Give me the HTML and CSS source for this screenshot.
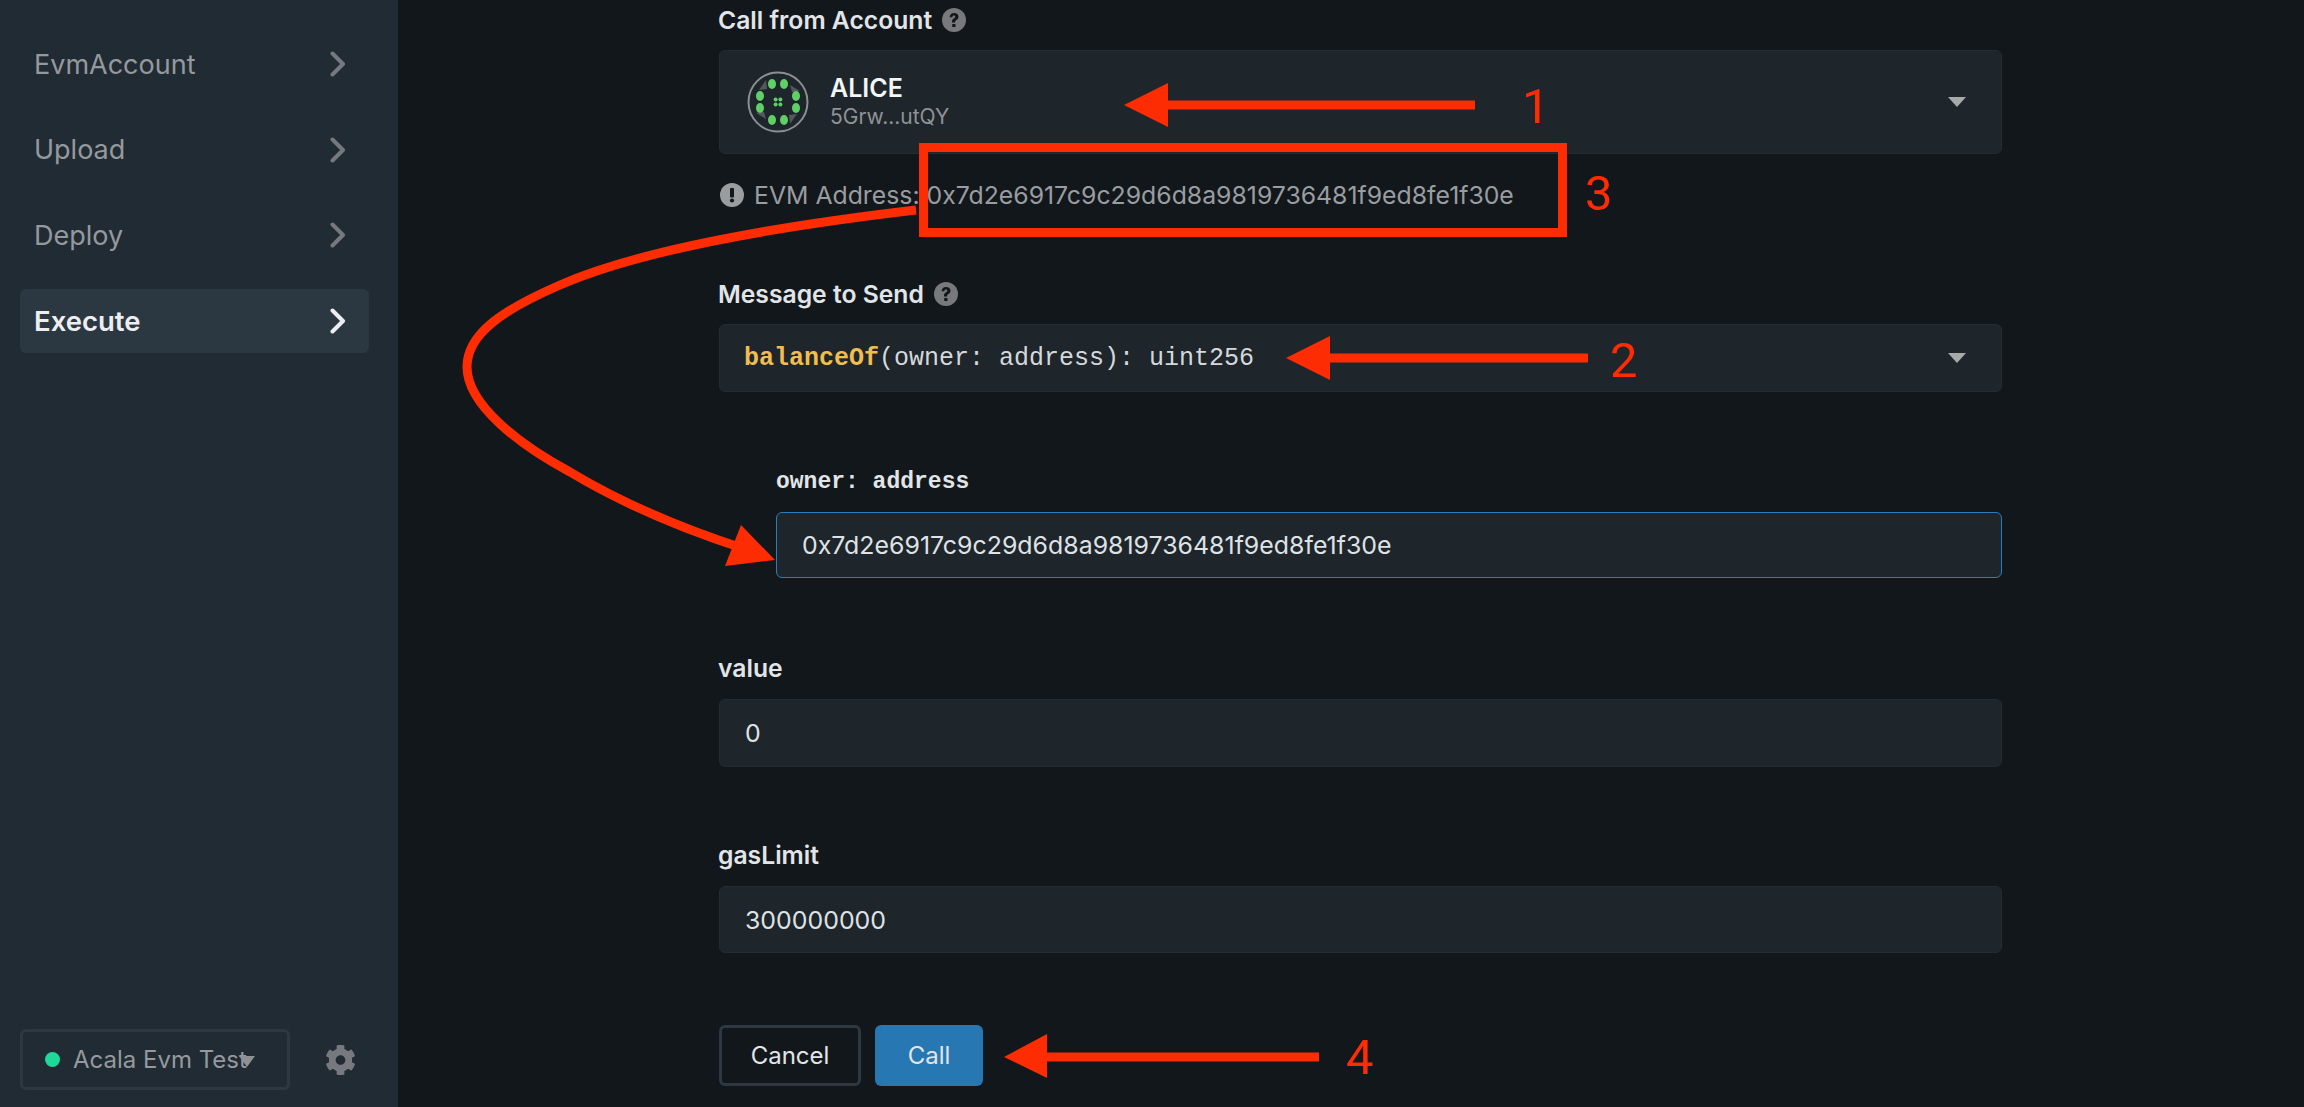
FILE: index.html
```html
<!DOCTYPE html>
<html lang="en">
<head>
    <meta charset="UTF-8">
    <meta name="viewport" content="width=device-width, initial-scale=1.0">
    <title>Execute</title>
    <link rel="stylesheet" href="styles.css">
</head>
<body>
    <aside class="sidebar">
        <nav class="nav">
            <a class="nav-item">EvmAccount
                <svg class="chevron" viewBox="0 0 16 26"><path d="M2.5 2.5 13 13 2.5 23.5"/></svg>
            </a>
            <a class="nav-item">Upload
                <svg class="chevron" viewBox="0 0 16 26"><path d="M2.5 2.5 13 13 2.5 23.5"/></svg>
            </a>
            <a class="nav-item">Deploy
                <svg class="chevron" viewBox="0 0 16 26"><path d="M2.5 2.5 13 13 2.5 23.5"/></svg>
            </a>
            <a class="nav-item active">Execute
                <svg class="chevron" viewBox="0 0 16 26"><path d="M2.5 2.5 13 13 2.5 23.5"/></svg>
            </a>
        </nav>
        <div class="network-row">
            <div class="network">
                <span class="dot"></span>
                <span class="network-name">Acala Evm Test</span>
                <span class="network-caret"></span>
            </div>
            <svg class="gear" viewBox="0 0 512 512"><path d="M487.4 315.7l-42.6-24.6c4.3-23.2 4.3-47 0-70.2l42.6-24.6c4.9-2.8 7.1-8.6 5.5-14-11.1-35.6-30-67.8-54.7-94.6-3.8-4.1-10-5.1-14.8-2.3L380.8 110c-17.9-15.4-38.5-27.3-60.8-35.1V25.8c0-5.6-3.9-10.5-9.4-11.7-36.7-8.2-74.3-7.8-109.2 0-5.5 1.2-9.4 6.1-9.4 11.7V75c-22.2 7.9-42.8 19.8-60.8 35.1L88.7 85.5c-4.9-2.8-11-1.9-14.8 2.3-24.7 26.7-43.6 58.9-54.7 94.6-1.7 5.4.6 11.2 5.5 14L67.3 221c-4.3 23.2-4.3 47 0 70.2l-42.6 24.6c-4.9 2.8-7.1 8.6-5.5 14 11.1 35.6 30 67.8 54.7 94.6 3.8 4.1 10 5.1 14.8 2.3l42.6-24.6c17.9 15.4 38.5 27.3 60.8 35.1v49.2c0 5.6 3.9 10.5 9.4 11.7 36.7 8.2 74.3 7.8 109.2 0 5.5-1.2 9.4-6.1 9.4-11.7v-49.2c22.2-7.9 42.8-19.8 60.8-35.1l42.6 24.6c4.9 2.8 11 1.9 14.8-2.3 24.7-26.7 43.6-58.9 54.7-94.6 1.5-5.5-.7-11.3-5.6-14.1zM256 336c-44.1 0-80-35.9-80-80s35.9-80 80-80 80 35.9 80 80-35.9 80-80 80z"/></svg>
        </div>
    </aside>

    <main class="main">
        <div class="form">
            <div class="label label-first">Call from Account
                <svg class="help" viewBox="0 0 24 24"><circle cx="12" cy="12" r="12"/><path d="M7.6 9.2c.2-2.700 2-4.200 4.500-4.200 2.600 0 4.400 1.500 4.400 3.800 0 1.700-1 2.600-2.100 3.300-1 .7-1.300 1.100-1.300 2v.5h-3.100v-.8c0-1.600.7-2.500 1.800-3.200 1-.7 1.500-1.100 1.500-1.800 0-.8-.6-1.300-1.400-1.300-1 0-1.500.6-1.600 1.700z"/><rect x="10.200" y="15.900" width="3.300" height="3.100" rx=".6"/></svg>
            </div>
            <div class="box account">
                <svg class="avatar" viewBox="-31 -31 62 62">
                    <circle class="avatar-ring" r="29.500"/>
                    <path class="avatar-shade" d="M-12-22-19-12-11-13ZM12-17 22-11 14-10ZM12 22 19 12 11 13ZM-12 17-22 11-14 10Z"/>
                    <g class="avatar-dots">
                        <ellipse cx="-6" cy="-18" rx="4" ry="5"/><ellipse cx="6" cy="-18" rx="4" ry="5"/>
                        <ellipse cx="-18" cy="-6" rx="4" ry="5"/><ellipse cx="18" cy="-6" rx="4" ry="5"/>
                        <ellipse cx="-18" cy="6" rx="4" ry="5"/><ellipse cx="18" cy="6" rx="4" ry="5"/>
                        <ellipse cx="-6" cy="18" rx="4" ry="5"/><ellipse cx="6" cy="18" rx="4" ry="5"/>
                        <circle cx="-2.400" cy="-2.400" r="2"/><circle cx="2.400" cy="-2.400" r="2"/>
                        <circle cx="-2.400" cy="2.400" r="2"/><circle cx="2.400" cy="2.400" r="2"/>
                    </g>
                </svg>
                <div class="account-text">
                    <div class="account-name">ALICE</div>
                    <div class="account-addr">5Grw...utQY</div>
                </div>
                <span class="caret"></span>
            </div>
            <div class="evm-row">
                <svg class="info" viewBox="0 0 24 24"><circle cx="12" cy="12" r="12"/><rect x="10" y="5" width="4" height="9.500" rx="1"/><circle cx="12" cy="17.500" r="2.100"/></svg>
                <span>EVM Address: 0x7d2e6917c9c29d6d8a9819736481f9ed8fe1f30e</span>
            </div>

            <div class="label label-message">Message to Send
                <svg class="help" viewBox="0 0 24 24"><circle cx="12" cy="12" r="12"/><path d="M7.6 9.2c.2-2.700 2-4.200 4.500-4.200 2.600 0 4.400 1.500 4.400 3.800 0 1.700-1 2.600-2.100 3.300-1 .7-1.300 1.100-1.300 2v.5h-3.100v-.8c0-1.600.7-2.500 1.800-3.200 1-.7 1.500-1.100 1.500-1.800 0-.8-.6-1.300-1.400-1.300-1 0-1.500.6-1.600 1.700z"/><rect x="10.200" y="15.900" width="3.300" height="3.100" rx=".6"/></svg>
            </div>
            <div class="box message">
                <span class="mono"><b class="fn">balanceOf</b>(owner: address): uint256</span>
                <span class="caret"></span>
            </div>

            <div class="args">
                <div class="arg-label">owner: address</div>
                <div class="box input focused">0x7d2e6917c9c29d6d8a9819736481f9ed8fe1f30e</div>
            </div>

            <div class="label label-value">value</div>
            <div class="box input">0</div>

            <div class="label label-gas">gasLimit</div>
            <div class="box input gas">300000000</div>

            <div class="buttons">
                <button class="btn btn-cancel">Cancel</button>
                <button class="btn btn-call">Call</button>
            </div>
        </div>
    </main>

    <!-- red annotations drawn on top of the screenshot -->
    <svg class="notes" width="2304" height="1107" viewBox="0 0 2304 1107">
        <path class="note-fill" d="M1124 105 1168 83V100.500H1475V109.500H1168V127Z"/>
        <path class="note-fill" d="M1286 358 1330 336V353.500H1588V362.500H1330V380Z"/>
        <path class="note-fill" d="M1004 1057 1047 1034V1052.500H1319V1061.500H1047V1078Z"/>
        <rect class="note-line" x="923.500" y="147.500" width="639" height="85" stroke-width="9"/>
        <path class="note-line" stroke-width="9" d="M916 210C780 226 640 250 560 285 500 311 467 335 467 367 467 405 520 445 570 472 620 502 680 528 745 549"/>
        <path class="note-fill" d="M775 560 741 525 725 566Z"/>
        <text class="note-num" x="1522" y="123">1</text>
        <text class="note-num" x="1610" y="377">2</text>
        <text class="note-num" x="1585" y="210">3</text>
        <text class="note-num" x="1346" y="1074">4</text>
    </svg>
</body>
</html>
```

FILE: styles.css
```css
* {
    box-sizing: border-box;
}
body {
    margin: 0;
    height: 100vh;
    overflow: hidden;
    display: flex;
    font-family: Inter, "Noto Sans", sans-serif;
    background: #12171b;
    color: #e2e5e8;
}
.sidebar {
    width: 398px;
    flex-shrink: 0;
    background: #212b33;
    padding: 32px 29px 17px 20px;
    display: flex;
    flex-direction: column;
    justify-content: space-between;
}
.nav {
    display: flex;
    flex-direction: column;
    gap: 21.5px;
}
.nav-item {
    height: 64px;
    padding: 0 23px 0 14px;
    border-radius: 6px;
    display: flex;
    align-items: center;
    justify-content: space-between;
    font-size: 27px;
    color: #95999d;
}
.nav-item.active {
    background: #2c3841;
    color: #eceef1;
    font-size: 27.5px;
    font-weight: 600;
}
.chevron {
    width: 16px;
    height: 26px;
    fill: none;
    stroke: #75797d;
    stroke-width: 4;
    stroke-linecap: round;
    stroke-linejoin: round;
}
.active .chevron {
    stroke: #eceef1;
}
.network-row {
    display: flex;
    align-items: center;
    justify-content: space-between;
}
.network {
    position: relative;
    width: 270px;
    height: 61px;
    border: 3px solid #2d3841;
    border-radius: 6px;
    padding-left: 22px;
    display: flex;
    align-items: center;
    gap: 13px;
    font-size: 24px;
    color: #95999d;
    white-space: nowrap;
}
.dot {
    width: 15px;
    height: 15px;
    border-radius: 50%;
    background: #1ed997;
}
.network-caret {
    position: absolute;
    left: 216px;
    top: 24px;
    width: 0;
    height: 0;
    border-left: 8px solid transparent;
    border-right: 8px solid transparent;
    border-top: 11px solid #8d9194;
}
.gear {
    width: 31px;
    height: 32px;
    fill: #76797d;
    margin-right: 13px;
}
.main {
    flex: 1;
    padding-left: 321px;
}
.form {
    width: 1283px;
}
.label {
    height: 28px;
    line-height: 28px;
    font-size: 24.7px;
    font-weight: 600;
    color: #e2e5e8;
    display: flex;
    align-items: center;
    gap: 10px;
    margin-left: -1px;
    margin-bottom: 17px;
}
.label-first {
    margin-top: 6px;
    margin-bottom: 16px;
}
.label-message {
    margin-top: 71px;
    margin-bottom: 16px;
}
.label-value {
    margin-top: 76px;
}
.label-gas {
    margin-top: 74px;
}
.help {
    width: 24px;
    height: 24px;
}
.help circle {
    fill: #77797d;
}
.help path,
.help rect {
    fill: #12171b;
}
.box {
    background: #1e252b;
    border: 1px solid #242c32;
    border-radius: 6px;
    display: flex;
    align-items: center;
}
.account {
    height: 104px;
    padding-left: 27px;
    position: relative;
}
.avatar {
    width: 62px;
    height: 62px;
    margin-right: 21px;
}
.avatar-ring {
    fill: none;
    stroke: #8c8f91;
    stroke-width: 2;
}
.avatar-shade {
    fill: #54585b;
}
.avatar-dots {
    fill: #5fcf66;
}
.account-name {
    font-size: 25px;
    font-weight: 600;
    line-height: 30px;
    color: #f4f5f6;
}
.account-addr {
    font-size: 21px;
    line-height: 28px;
    color: #8f9396;
}
.caret {
    margin-left: auto;
    margin-right: 35px;
    width: 0;
    height: 0;
    border-left: 9px solid transparent;
    border-right: 9px solid transparent;
    border-top: 10px solid #a7a9ab;
}
.evm-row {
    margin-top: 27px;
    height: 28px;
    line-height: 28px;
    padding-left: 1px;
    display: flex;
    align-items: center;
    gap: 10px;
    font-size: 24.8px;
    color: #9a9da0;
    white-space: nowrap;
}
.info {
    width: 24px;
    height: 24px;
}
.info circle:first-child {
    fill: #9a9da0;
}
.info rect,
.info circle {
    fill: #12171b;
}
.message {
    height: 68px;
    padding-left: 24px;
}
.mono {
    font-family: "Liberation Mono", monospace;
    font-size: 25px;
    color: #d5d8db;
}
.fn {
    color: #f0bd4f;
}
.args {
    margin-left: 57px;
    margin-top: 76px;
}
.arg-label {
    height: 28px;
    line-height: 28px;
    font-family: "Liberation Mono", monospace;
    font-size: 23px;
    font-weight: 700;
    color: #e2e5e8;
    margin-bottom: 16px;
}
.input {
    height: 68px;
    padding-left: 25px;
    font-size: 24.9px;
    color: #dfe2e5;
}
.input.focused {
    height: 66px;
    border-color: #2b7dba;
}
.input.gas {
    height: 67px;
}
.buttons {
    margin-top: 72px;
    display: flex;
    gap: 14px;
}
.btn {
    height: 61px;
    border-radius: 6px;
    font-family: inherit;
    font-size: 24px;
    color: #e2e5e8;
}
.btn-cancel {
    width: 142px;
    background: transparent;
    border: 3px solid #2d3841;
}
.btn-call {
    width: 108px;
    background: #2777b3;
    border: none;
}
.notes {
    position: absolute;
    left: 0;
    top: 0;
    pointer-events: none;
}
.note-fill {
    fill: #fe2c02;
}
.note-line {
    fill: none;
    stroke: #fe2c02;
}
.note-num {
    fill: #fe2c02;
    font-family: Roboto, "Liberation Sans", sans-serif;
    font-size: 49px;
}
```
